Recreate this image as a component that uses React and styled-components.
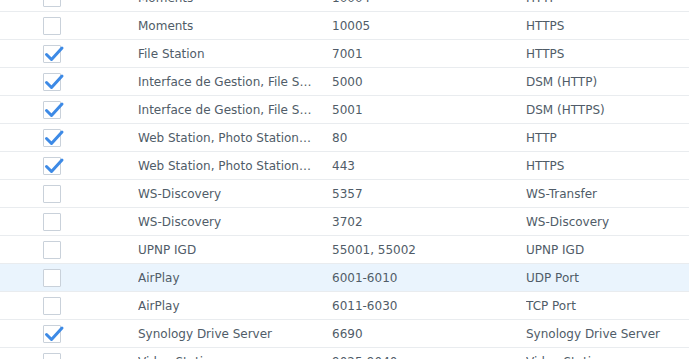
import React from 'react'
import styled, { createGlobalStyle } from 'styled-components'

const rows = [
    { name: 'Moments', port: '10004', proto: 'HTTP', on: false },
    { name: 'Moments', port: '10005', proto: 'HTTPS', on: false },
    { name: 'File Station', port: '7001', proto: 'HTTPS', on: true },
    { name: 'Interface de Gestion, File Station', port: '5000', proto: 'DSM (HTTP)', on: true },
    { name: 'Interface de Gestion, File Station', port: '5001', proto: 'DSM (HTTPS)', on: true },
    { name: 'Web Station, Photo Station, Moments', port: '80', proto: 'HTTP', on: true },
    { name: 'Web Station, Photo Station, Moments', port: '443', proto: 'HTTPS', on: true },
    { name: 'WS-Discovery', port: '5357', proto: 'WS-Transfer', on: false },
    { name: 'WS-Discovery', port: '3702', proto: 'WS-Discovery', on: false },
    { name: 'UPNP IGD', port: '55001, 55002', proto: 'UPNP IGD', on: false },
    { name: 'AirPlay', port: '6001-6010', proto: 'UDP Port', on: false, hover: true },
    { name: 'AirPlay', port: '6011-6030', proto: 'TCP Port', on: false },
    { name: 'Synology Drive Server', port: '6690', proto: 'Synology Drive Server', on: true },
    { name: 'Video Station', port: '9025-9040', proto: 'Video Station', on: false },
]

export default function App() {
    return (
        <>
            <GlobalStyle />
            <Grid>
                {rows.map((r, i) => (
                    <Row key={i} $hover={r.hover}>
                        <CheckCell>
                            <Box>
                                {r.on && (
                                    <Tick viewBox="0 0 22 22">
                                        <path d="M3.5 11.5 L8.5 16.5 L19 5" />
                                    </Tick>
                                )}
                            </Box>
                        </CheckCell>
                        <Cell>{r.name}</Cell>
                        <Cell>{r.port}</Cell>
                        <Cell>{r.proto}</Cell>
                    </Row>
                ))}
            </Grid>
        </>
    )
}

const GlobalStyle = createGlobalStyle`
    html, body {
        margin: 0;
        background: #fff;
        overflow: hidden;
    }
    body {
        font-family: "DejaVu Sans", Verdana, sans-serif;
    }
`

// list is scrolled, so the first row is only partly visible
const Grid = styled.div`
    margin-top: -16px;
    width: 689px;
`

const Row = styled.div`
    display: grid;
    grid-template-columns: 138px 194px 194px 1fr;
    align-items: center;
    height: 27px;
    border-bottom: 1px solid #e9ecef;
    background: ${p => (p.$hover ? '#eaf4fd' : '#fff')};
`

const CheckCell = styled.div`
    display: flex;
    padding-left: 43px;
    padding-top: 1px;
`

const Box = styled.div`
    position: relative;
    width: 16px;
    height: 16px;
    border: 1px solid #c9d1da;
    border-radius: 1px;
    background: #fff;
`

const Tick = styled.svg`
    position: absolute;
    left: -1px;
    top: -3px;
    width: 22px;
    height: 22px;
    fill: none;
    stroke: #3d8ae6;
    stroke-width: 3;
    stroke-linecap: round;
    stroke-linejoin: round;
`

const Cell = styled.div`
    padding-right: 20px;
    font-size: 12px;
    color: #505c68;
    white-space: nowrap;
    overflow: hidden;
    text-overflow: ellipsis;
`
